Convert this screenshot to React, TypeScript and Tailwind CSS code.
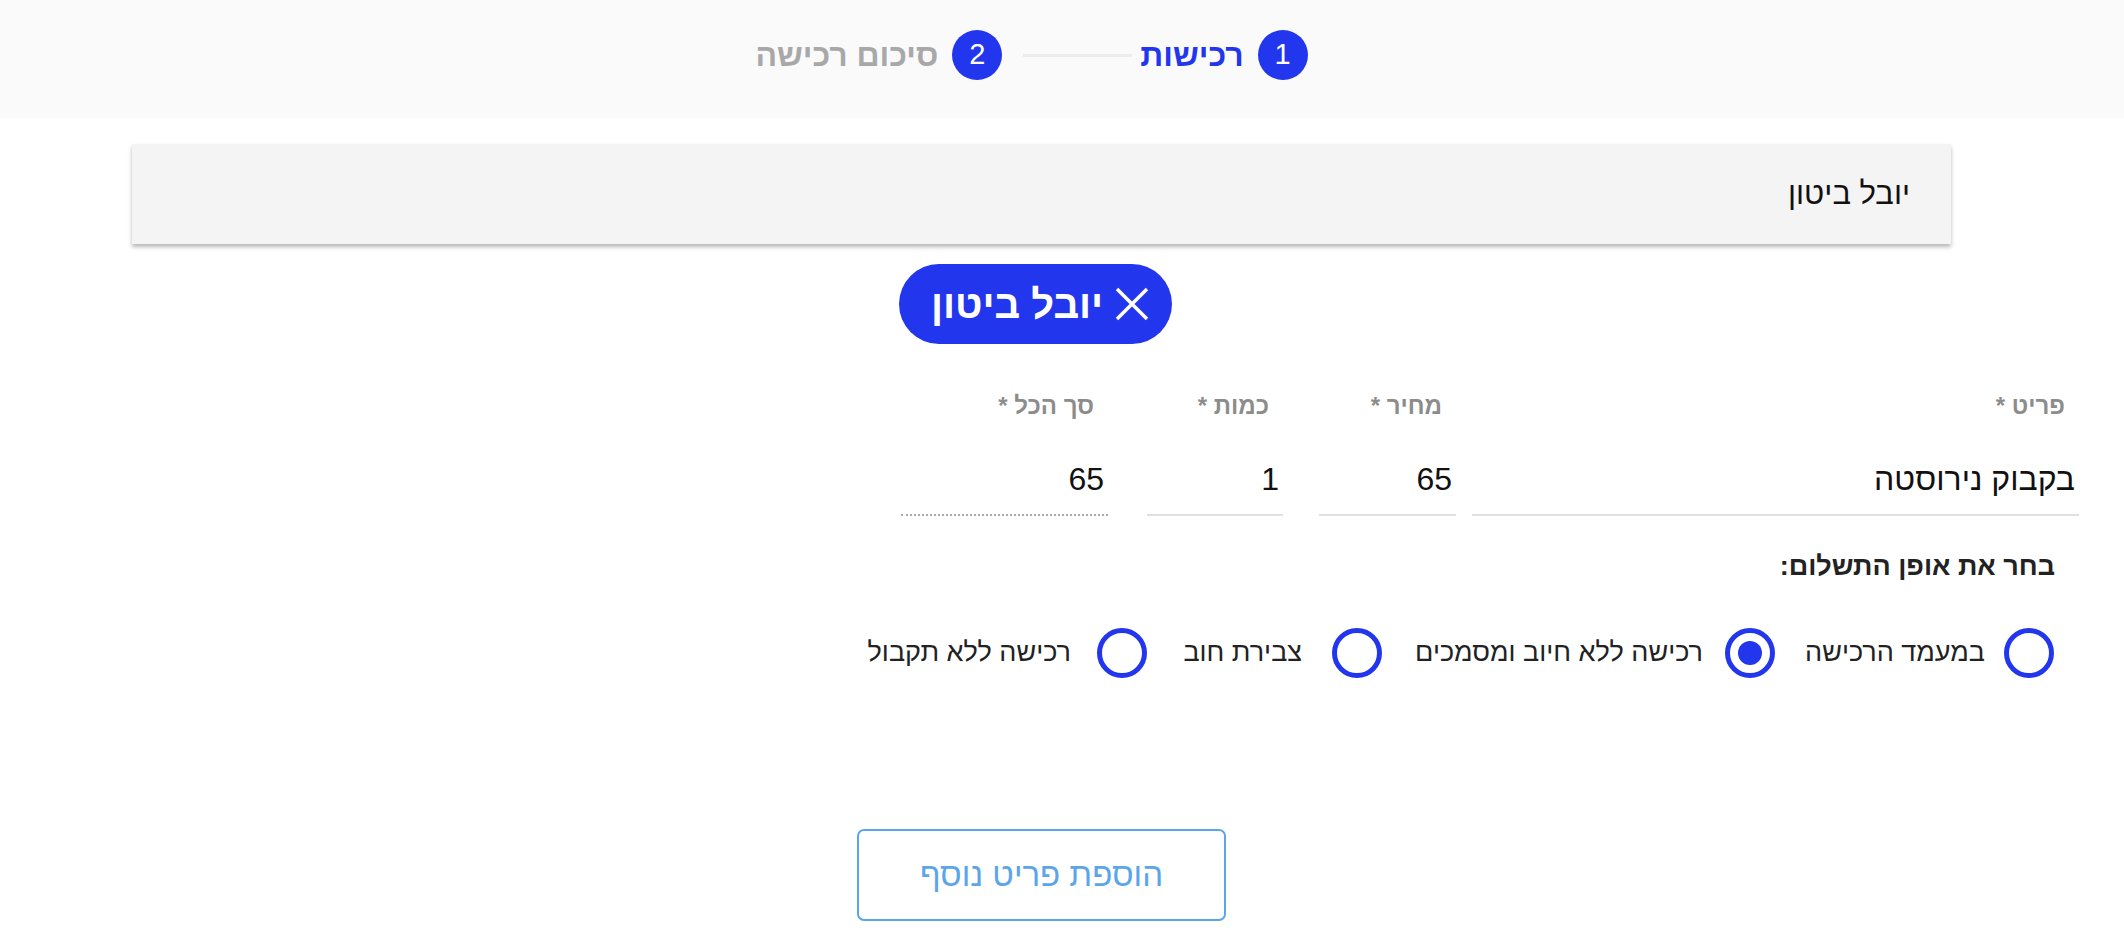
const font = { fontFamily: '"Liberation Sans", Arial, sans-serif' };

function Step({ n, label, active }: { n: number; label: string; active?: boolean }) {
  return (
    <div className="flex items-center gap-[14px]">
      <div className="w-[50px] h-[50px] rounded-full bg-[#2236ee] text-white flex items-center justify-center text-[29px] font-medium">
        {n}
      </div>
      <span className={`text-[32px] font-bold ${active ? "text-[#2236ee]" : "text-[#a8a8a8]"}`}>{label}</span>
    </div>
  );
}

function Field({ label, value, width, dotted }: { label: string; value: string; width: string; dotted?: boolean }) {
  return (
    <div className={`${width} flex flex-col`}>
      <label className="text-[24px] font-semibold text-[#8c8c8c] pr-[14px] h-[28px] leading-[28px]">{label}</label>
      <div
        className={`mt-[26px] h-[70px] flex items-end text-[32px] text-[#111] ${
          dotted ? "border-b-2 border-dotted border-[#aaa]" : "border-b-2 border-[#e0e0e0]"
        }`}
      >
        <span className="leading-[40px] pb-[15px] pr-[4px]">{value}</span>
      </div>
    </div>
  );
}

function Radio({ label, checked, gap, width }: { label: string; checked?: boolean; gap: string; width: string }) {
  return (
    <label className={`flex items-center ${gap}`}>
      <span className="w-[50px] h-[50px] shrink-0 rounded-full border-[5px] border-[#2236ee] flex items-center justify-center">
        {checked && <span className="w-[24px] h-[24px] rounded-full bg-[#2236ee]" />}
      </span>
      <span className={`${width} text-[27px] text-[#222] whitespace-nowrap`}>{label}</span>
    </label>
  );
}

export default function App() {
  return (
    <div dir="rtl" className="w-[2124px] min-h-[950px] bg-white" style={font}>
      {/* stepper */}
      <div className="h-[118px] bg-[#fafafa] flex items-center pb-[8px]">
        <div className="mr-[173px] w-[1819px] flex justify-center items-center pr-[20px]">
          <Step n={1} label="רכישות" active />
          <div className="w-[109px] h-[3px] bg-[#ececec] mr-[8px] ml-[21px]" />
          <Step n={2} label="סיכום רכישה" />
        </div>
      </div>

      {/* customer card */}
      <div className="mr-[173px] w-[1819px] mt-[26px] h-[100px] bg-[#f4f4f4] shadow-[0_3px_4px_rgba(0,0,0,0.28)] flex items-center pr-[41px]">
        <span className="text-[31px] text-[#111]">יובל ביטון</span>
      </div>

      {/* selected chip */}
      <div className="mr-[173px] w-[1819px] flex justify-center mt-[20px] pr-[12px]">
        <div className="h-[80px] rounded-full bg-[#2236ee] text-white flex items-center gap-[12px] pr-[23px] pl-[32px]">
          <svg width="34" height="34" viewBox="0 0 34 34" fill="none" stroke="currentColor" strokeWidth="3.5">
            <path d="M2 2 L32 32 M32 2 L2 32" />
          </svg>
          <span className="text-[40px] font-bold">יובל ביטון</span>
        </div>
      </div>

      {/* item fields */}
      <div className="flex pr-[45px] mt-[48px]">
        <Field label="פריט *" value="בקבוק נירוסטה" width="w-[607px]" />
        <div className="w-[16px]" />
        <Field label="מחיר *" value="65" width="w-[137px]" />
        <div className="w-[36px]" />
        <Field label="כמות *" value="1" width="w-[136px]" />
        <div className="w-[39px]" />
        <Field label="סך הכל *" value="65" width="w-[207px]" dotted />
      </div>

      {/* payment method */}
      <div className="pr-[69px] mt-[30px] text-[27px] font-bold text-[#222]">בחר את אופן התשלום:</div>
      <div className="pr-[70px] mt-[41px] flex items-center">
        <Radio label="במעמד הרכישה" gap="gap-[19px]" width="w-[173px]" />
        <div className="w-[37px]" />
        <Radio label="רכישה ללא חיוב ומסמכים" checked gap="gap-[22px]" width="w-[263px]" />
        <div className="w-[58px]" />
        <Radio label="צבירת חוב" gap="gap-[30px]" width="w-[126px]" />
        <div className="w-[29px]" />
        <Radio label="רכישה ללא תקבול" gap="gap-[26px]" width="w-[220px]" />
      </div>

      {/* add item */}
      <div className="mr-[173px] w-[1819px] flex justify-center mt-[151px]">
        <button className="w-[369px] h-[92px] rounded-[7px] border-2 border-[#5ba5ea] text-[#5ba5ea] text-[33px] font-medium">
          הוספת פריט נוסף
        </button>
      </div>
    </div>
  );
}
